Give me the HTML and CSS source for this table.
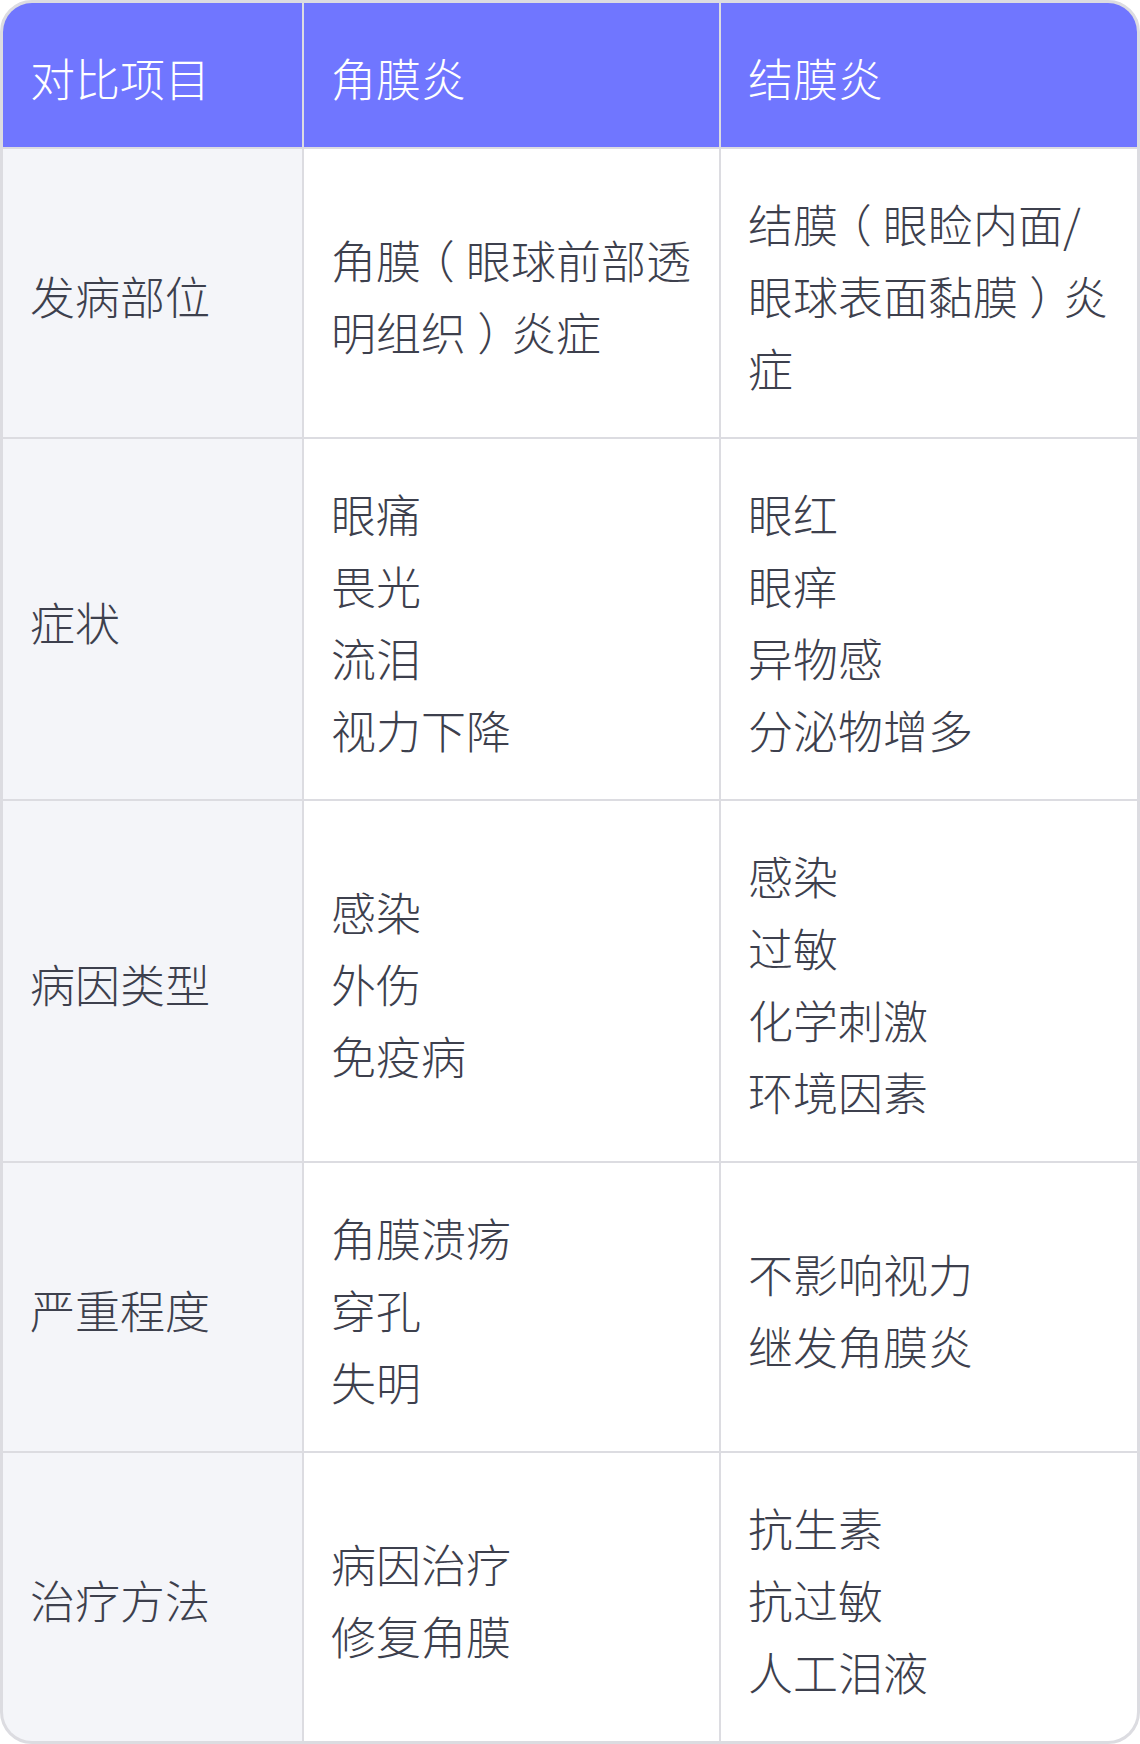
FILE: index.html
```html
<!DOCTYPE html>
<html lang="zh-CN">
<head>
<meta charset="utf-8">
<title>角膜炎与结膜炎对比</title>
<link rel="stylesheet" href="styles.css">
</head>
<body>
<div class="table" role="table">
  <div class="cell head" role="columnheader"><p>对比项目</p></div>
  <div class="cell head" role="columnheader"><p>角膜炎</p></div>
  <div class="cell head" role="columnheader"><p>结膜炎</p></div>

  <div class="cell label"><p>发病部位</p></div>
  <div class="cell"><p>角膜<span class="punct">（</span>眼球前部透明组织<span class="punct">）</span>炎症</p></div>
  <div class="cell"><p>结膜<span class="punct">（</span>眼睑内面/眼球表面黏膜<span class="punct">）</span>炎症</p></div>

  <div class="cell label"><p>症状</p></div>
  <div class="cell"><p>眼痛<br>畏光<br>流泪<br>视力下降</p></div>
  <div class="cell"><p>眼红<br>眼痒<br>异物感<br>分泌物增多</p></div>

  <div class="cell label"><p>病因类型</p></div>
  <div class="cell"><p>感染<br>外伤<br>免疫病</p></div>
  <div class="cell"><p>感染<br>过敏<br>化学刺激<br>环境因素</p></div>

  <div class="cell label"><p>严重程度</p></div>
  <div class="cell"><p>角膜溃疡<br>穿孔<br>失明</p></div>
  <div class="cell"><p>不影响视力<br>继发角膜炎</p></div>

  <div class="cell label"><p>治疗方法</p></div>
  <div class="cell"><p>病因治疗<br>修复角膜</p></div>
  <div class="cell"><p>抗生素<br>抗过敏<br>人工泪液</p></div>
</div>
</body>
</html>
```
FILE: styles.css
```css
html, body {
  margin: 0;
  padding: 0;
  background: #ffffff;
}

.table {
  width: 1140px;
  box-sizing: border-box;
  border: 3px solid #dcdce1;
  border-radius: 32px;
  overflow: hidden;
  display: grid;
  grid-template-columns: 299px 415px 1fr;
  gap: 2px;
  background: #dcdce1;
  font-family: "Noto Sans CJK SC", "Noto Sans", sans-serif;
  font-weight: 300;
  font-size: 45px;
  line-height: 72px;
  color: #3d404d;
}

.cell {
  background: #ffffff;
  padding: 39px 22px 33px 27px;
  display: flex;
  align-items: center;
  word-break: break-all;
}

.cell p {
  margin: 0;
}

.punct {
  font-feature-settings: "halt" 1;
  margin: 0 0.25em;
}

.head {
  background: #7076ff;
  color: #ffffff;
}

.label {
  background: #f4f5f9;
}
```
